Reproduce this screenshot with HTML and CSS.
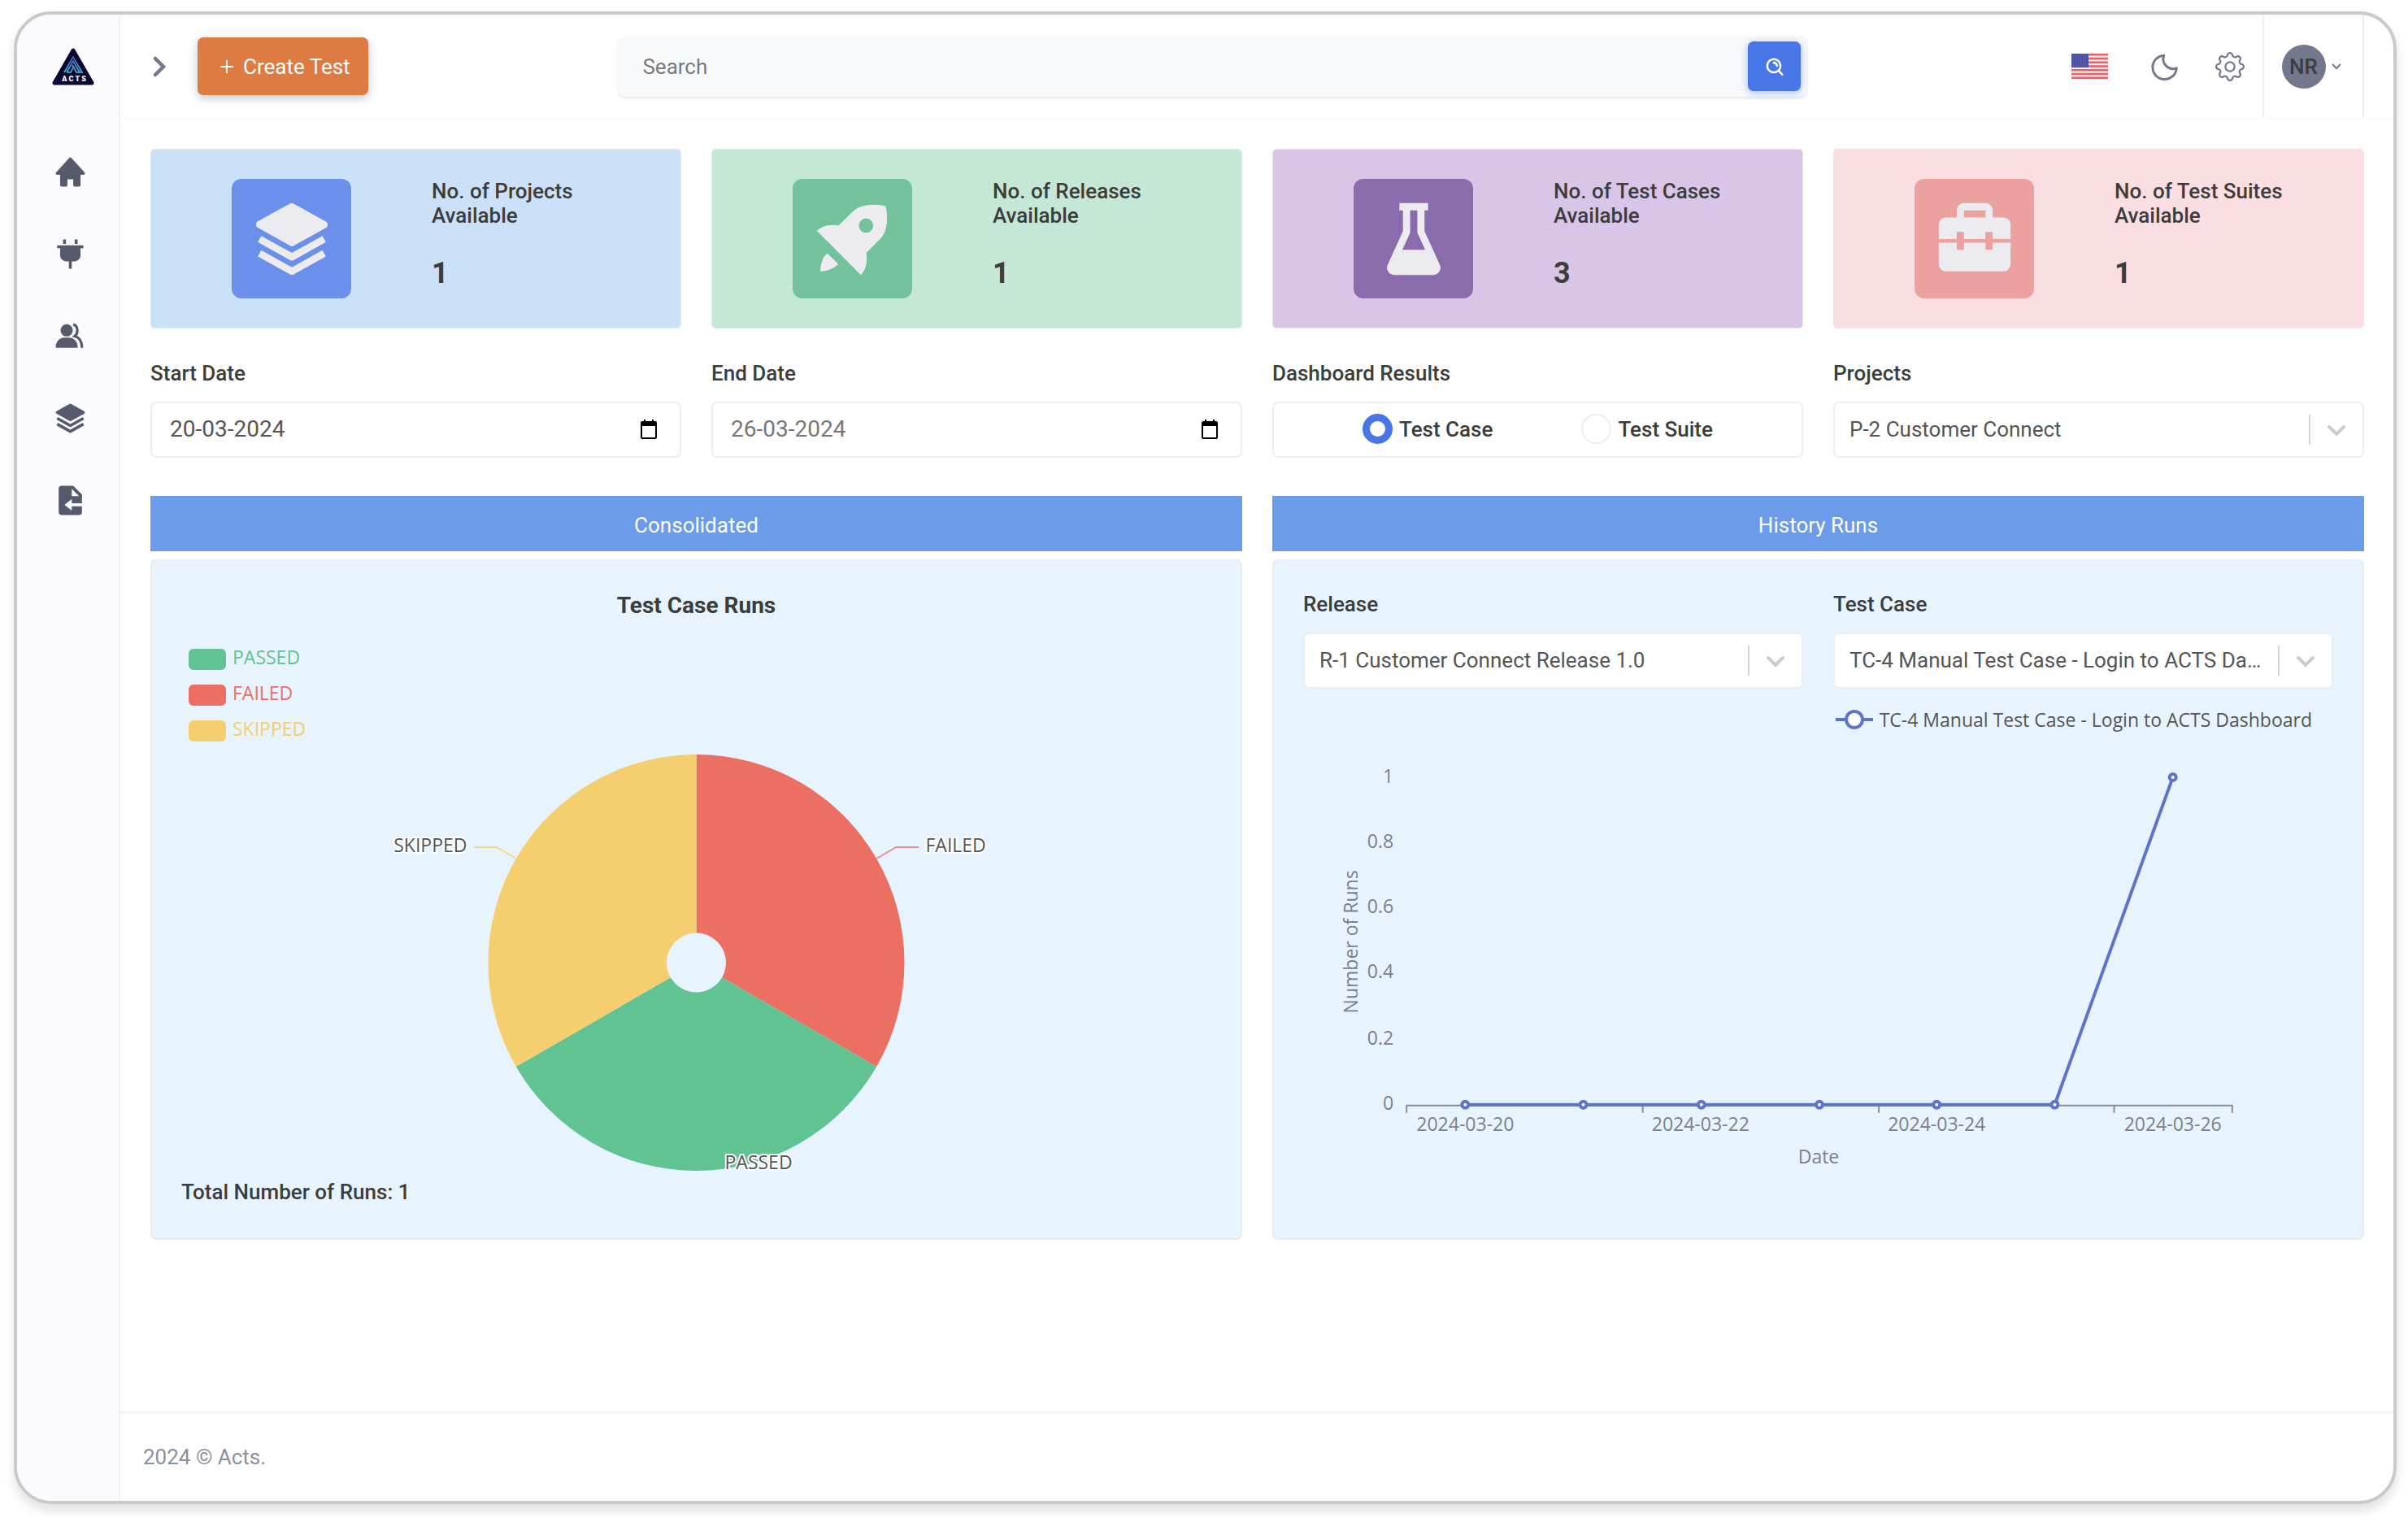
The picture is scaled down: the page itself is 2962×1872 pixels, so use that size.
FILE: index.html
```html
<!DOCTYPE html>
<html lang="en">
<head>
  <meta charset="UTF-8" />
  <meta name="viewport" content="width=device-width, initial-scale=1" />
  <title>ACTS Dashboard</title>
  <link rel="stylesheet" href="styles.css">
</head>
<body>
  <div class="app">
    <aside class="sidebar">
      <a class="brand" href="#" aria-label="ACTS">
        <svg width="52" height="46" viewBox="0 0 52 46">
          <defs>
            <linearGradient id="mark" x1="0" y1="0" x2="0" y2="1">
              <stop offset="0" stop-color="#4a5fd0" />
              <stop offset="1" stop-color="#3cc0cf" />
            </linearGradient>
          </defs>
          <path d="M26 3 3 43h46z" fill="#0a0830" stroke="#0a0830" stroke-width="5" stroke-linejoin="round" />
          <path d="M15 30 26 11l11 19h-7l-5-9M18 30h5l4-8M18 30l8-14 8 14" fill="none" stroke="url(#mark)" stroke-width="1.6" />
          <text class="brand-text" x="27" y="41" text-anchor="middle">A C T S</text>
        </svg>
      </a>
      <nav class="side-nav">
        <a href="#" aria-label="Home">
          <svg class="icon" viewBox="0 0 24 24"><path d="m21.743 12.331-9-10c-.379-.422-1.107-.422-1.486 0l-9 10a.998.998 0 0 0-.17 1.076c.16.361.518.593.913.593h2v7a1 1 0 0 0 1 1h3a1 1 0 0 0 1-1v-4h4v4a1 1 0 0 0 1 1h3a1 1 0 0 0 1-1v-7h2a.998.998 0 0 0 .743-1.669z" /></svg>
        </a>
        <a href="#" aria-label="Integrations">
          <svg class="icon" viewBox="0 0 24 24"><path d="M7 2h2v3H7zM15 2h2v3h-2zM3 6v2h2v5a4 4 0 0 0 4 4h2v5h2v-5h2a4 4 0 0 0 4-4V8h2V6z" /></svg>
        </a>
        <a href="#" aria-label="Users">
          <svg class="icon" viewBox="0 0 24 24">
            <circle cx="9.5" cy="8" r="4.2" />
            <path d="M2 20v-1a6 6 0 0 1 6-6h3a6 6 0 0 1 6 6v1z" />
            <path d="M14 4c3 .6 4 5.6 1 8 3 .8 5 3.5 5 8" fill="none" stroke="currentColor" stroke-width="1.8" />
          </svg>
        </a>
        <a href="#" aria-label="Releases">
          <svg class="icon" viewBox="0 0 24 24"><path d="M21.484 7.125l-9.022-5a1.003 1.003 0 0 0-.968 0l-8.978 4.96a1 1 0 0 0-.003 1.748l9.022 5.04a.995.995 0 0 0 .973.001l8.978-5a1 1 0 0 0-.002-1.749z" /><path d="M12 15.856l-8.515-4.73-.971 1.748 9 5a1 1 0 0 0 .971 0l9-5-.971-1.748z" /><path d="M12 19.856l-8.515-4.73-.971 1.748 9 5a1 1 0 0 0 .971 0l9-5-.971-1.748z" /></svg>
        </a>
        <a href="#" aria-label="Import">
          <svg class="icon" viewBox="0 0 24 24"><path fill-rule="evenodd" d="M20 8l-6-6H6a2 2 0 0 0-2 2v16a2 2 0 0 0 2 2h12a2 2 0 0 0 2-2v-4h-7v3l-5-4 5-4v3h7zM13 9V4l5 5z" /></svg>
        </a>
      </nav>
    </aside>

    <div class="page">
      <header class="topbar">
        <button class="menu-toggle" type="button" aria-label="Expand menu">
          <svg width="24" height="30" viewBox="0 0 24 30"><path d="M7 5l10 10L7 25" fill="none" stroke="currentColor" stroke-width="4.5" stroke-linecap="round" /></svg>
        </button>
        <button class="create-btn" type="button">
          <svg width="24" height="24" viewBox="0 0 24 24"><path d="M13 4v16M5 12h16" fill="none" stroke="currentColor" stroke-width="2" /></svg>
          Create Test
        </button>
        <form class="search">
          <input type="text" placeholder="Search" aria-label="Search" />
          <button class="search-btn" type="button" aria-label="Submit search">
            <svg width="26" height="26" viewBox="0 0 24 24" fill="none" stroke="currentColor" stroke-width="2.4" stroke-linecap="round"><circle cx="11" cy="11" r="7.5" /><path d="M16.5 16.5 20.500 21M11 7.500a3.500 3.500 0 0 1 3.500 3.500" /></svg>
          </button>
        </form>
        <div class="tools">
          <button class="flag" type="button" aria-label="Language">
            <svg width="45" height="31" viewBox="0 0 45 31">
              <path fill="#fbe9ea" d="M0 0h45v31H0z" />
              <path stroke="#ea6068" stroke-width="2.4" d="M0 1.2h45M0 6h45M0 10.7h45M0 15.5h45M0 20.3h45M0 25h45M0 29.8h45" />
              <path fill="#4d51a3" d="M0 0h21v17H0z" />
              <path stroke="#7476b8" stroke-width="1" stroke-dasharray="1 2" d="M2 3h18M2 6h18M2 9h18M2 12h18M2 15h18" />
            </svg>
          </button>
          <button type="button" aria-label="Dark mode">
            <svg width="36" height="36" viewBox="0 0 24 24"><path d="M21.5 13.2A9.8 9.8 0 1 1 11.2 2.8 8 8 0 0 0 21.5 13.2z" fill="none" stroke="currentColor" stroke-width="2" stroke-linejoin="round" /></svg>
          </button>
          <button type="button" aria-label="Settings">
            <svg width="36" height="36" viewBox="0 0 16 16"><circle cx="8" cy="8" r="2.5" fill="none" stroke="currentColor" /><path fill="currentColor" d="M9.796 1.343c-.527-1.79-3.065-1.79-3.592 0l-.094.319a.873.873 0 0 1-1.255.52l-.292-.16c-1.64-.892-3.433.902-2.54 2.541l.159.292a.873.873 0 0 1-.52 1.255l-.319.094c-1.79.527-1.79 3.065 0 3.592l.319.094a.873.873 0 0 1 .52 1.255l-.16.292c-.892 1.64.901 3.434 2.541 2.54l.292-.159a.873.873 0 0 1 1.255.52l.094.319c.527 1.79 3.065 1.79 3.592 0l.094-.319a.873.873 0 0 1 1.255-.52l.292.16c1.64.893 3.434-.902 2.54-2.541l-.159-.292a.873.873 0 0 1 .52-1.255l.319-.094c1.79-.527 1.79-3.065 0-3.592l-.319-.094a.873.873 0 0 1-.52-1.255l.16-.292c.893-1.64-.902-3.433-2.541-2.54l-.292.159a.873.873 0 0 1-1.255-.52zm-2.633.283c.246-.835 1.428-.835 1.674 0l.094.319a1.873 1.873 0 0 0 2.693 1.115l.291-.16c.764-.415 1.6.42 1.184 1.185l-.159.292a1.873 1.873 0 0 0 1.116 2.692l.318.094c.835.246.835 1.428 0 1.674l-.319.094a1.873 1.873 0 0 0-1.115 2.693l.16.291c.415.764-.42 1.6-1.185 1.184l-.291-.159a1.873 1.873 0 0 0-2.693 1.116l-.094.318c-.246.835-1.428.835-1.674 0l-.094-.319a1.873 1.873 0 0 0-2.692-1.115l-.292.16c-.764.415-1.6-.42-1.184-1.185l.159-.291A1.873 1.873 0 0 0 1.945 8.93l-.319-.094c-.835-.246-.835-1.428 0-1.674l.319-.094A1.873 1.873 0 0 0 3.06 4.377l-.16-.292c-.415-.764.42-1.6 1.185-1.184l.292.159a1.873 1.873 0 0 0 2.692-1.115z" /></svg>
          </button>
        </div>
        <button class="profile" type="button">
          <span class="avatar">NR</span>
          <svg width="14" height="12" viewBox="0 0 14 12"><path d="M2 3l5 5 5-5" fill="none" stroke="currentColor" stroke-width="2" /></svg>
        </button>
      </header>

      <main class="content">
        <section class="stats">
          <article class="stat stat-projects">
            <div class="stat-icon">
              <svg viewBox="0 0 24 24"><path d="M21.484 7.125l-9.022-5a1.003 1.003 0 0 0-.968 0l-8.978 4.96a1 1 0 0 0-.003 1.748l9.022 5.04a.995.995 0 0 0 .973.001l8.978-5a1 1 0 0 0-.002-1.749z" /><path d="M12 15.856l-8.515-4.73-.971 1.748 9 5a1 1 0 0 0 .971 0l9-5-.971-1.748z" /><path d="M12 19.856l-8.515-4.73-.971 1.748 9 5a1 1 0 0 0 .971 0l9-5-.971-1.748z" /></svg>
            </div>
            <div class="stat-text">
              <h2>No. of Projects<br />Available</h2>
              <p>1</p>
            </div>
          </article>
          <article class="stat stat-releases">
            <div class="stat-icon">
              <svg viewBox="0 0 24 24"><path d="M15.78 15.84S18.64 13 19.61 12c3.07-3 1.54-9.18 1.54-9.18S15 1.29 12 4.36C9.66 6.64 8.14 8.22 8.14 8.22S4.3 7.42 2 9.72L14.25 22c2.3-2.33 1.53-6.16 1.53-6.16zm-1.5-9a2 2 0 0 1 2.83 0 2 2 0 1 1-2.83 0zM3 21a7.81 7.81 0 0 0 5-2l-3-3c-2 1-2 5-2 5z" /></svg>
            </div>
            <div class="stat-text">
              <h2>No. of Releases<br />Available</h2>
              <p>1</p>
            </div>
          </article>
          <article class="stat stat-cases">
            <div class="stat-icon">
              <svg viewBox="0 0 24 24"><path d="M15 9.783V4h1V2H8v2h1v5.783l-4.268 9.389a1.992 1.992 0 0 0 .14 1.911A1.99 1.99 0 0 0 6.553 22h10.895a1.99 1.99 0 0 0 1.681-.917c.37-.574.423-1.289.14-1.911L15 9.783zm-4.09.631c.06-.13.09-.271.09-.414V4h2v6c0 .143.03.284.09.414L15.177 15H8.825l2.085-4.586z" /></svg>
            </div>
            <div class="stat-text">
              <h2>No. of Test Cases<br />Available</h2>
              <p>3</p>
            </div>
          </article>
          <article class="stat stat-suites">
            <div class="stat-icon">
              <svg viewBox="0 0 24 24"><path fill-rule="evenodd" d="M2 12V8a2 2 0 0 1 2-2h3V4a2 2 0 0 1 2-2h6a2 2 0 0 1 2 2v2h3a2 2 0 0 1 2 2v4h-5v-2h-2v2H9v-2H7v2zM9 4v2h6V4z" /><path d="M2 13v6a2 2 0 0 0 2 2h16a2 2 0 0 0 2-2v-6h-5v2h-2v-2H9v2H7v-2z" /></svg>
            </div>
            <div class="stat-text">
              <h2>No. of Test Suites<br />Available</h2>
              <p>1</p>
            </div>
          </article>
        </section>

        <section class="filters">
          <div class="field">
            <label for="start-date">Start Date</label>
            <div class="control">
              <input type="text" id="start-date" value="20-03-2024" />
              <svg class="calendar" width="20" height="24" viewBox="0 0 20 24"><path d="M4 0h2v2h8V0h2v2h2a2 2 0 0 1 2 2v18a2 2 0 0 1-2 2H2a2 2 0 0 1-2-2V4a2 2 0 0 1 2-2h2zM2 8v14h16V8z" fill-rule="evenodd" /></svg>
            </div>
          </div>
          <div class="field">
            <label for="end-date">End Date</label>
            <div class="control">
              <input type="text" id="end-date" class="muted" value="26-03-2024" />
              <svg class="calendar" width="20" height="24" viewBox="0 0 20 24"><path d="M4 0h2v2h8V0h2v2h2a2 2 0 0 1 2 2v18a2 2 0 0 1-2 2H2a2 2 0 0 1-2-2V4a2 2 0 0 1 2-2h2zM2 8v14h16V8z" fill-rule="evenodd" /></svg>
            </div>
          </div>
          <div class="field">
            <span class="field-title" id="results-title">Dashboard Results</span>
            <div class="control radios" role="radiogroup" aria-labelledby="results-title">
              <label for="r-case"><input type="radio" name="results" id="r-case" checked />Test Case</label>
              <label for="r-suite"><input type="radio" name="results" id="r-suite" />Test Suite</label>
            </div>
          </div>
          <div class="field">
            <label for="projects">Projects</label>
            <div class="control select">
              <select id="projects">
                <option>P-2 Customer Connect</option>
              </select>
              <svg class="caret" width="24" height="16" viewBox="0 0 24 16"><path d="M3 3l9 9 9-9" fill="none" stroke="#ccc" stroke-width="4" stroke-linecap="round" /></svg>
            </div>
          </div>
        </section>

        <section class="charts">
          <div class="chart-col">
            <h2 class="chart-tab">Consolidated</h2>
            <div class="panel">
              <h3 class="chart-title">Test Case Runs</h3>
              <ul class="legend">
                <li class="passed">PASSED</li>
                <li class="failed">FAILED</li>
                <li class="skipped">SKIPPED</li>
              </ul>
              <svg class="pie" viewBox="0 0 800 525">
                <path fill="#eb6f63" d="M400 7a256 256 0 0 1 221.700 384L431.600 281.250A36.500 36.500 0 0 0 400 226.500z" />
                <path fill="#61c292" d="M621.700 391a256 256 0 0 1-443.400 0L368.400 281.250a36.500 36.500 0 0 0 63.200 0z" />
                <path fill="#f4ce6f" d="M178.300 391A256 256 0 0 1 400 7v219.500a36.500 36.500 0 0 0-31.600 54.750z" />
                <path fill="none" stroke="#eb8f8b" stroke-width="2" d="M621.700 135l24-14h28" />
                <path fill="none" stroke="#f3d88c" stroke-width="2" d="M178.300 135l-24-14h-28" />
                <text class="pie-label" x="118" y="127" text-anchor="end">SKIPPED</text>
                <text class="pie-label" x="682" y="127">FAILED</text>
                <text class="pie-label" x="435" y="517">PASSED</text>
              </svg>
              <p class="total">Total Number of Runs: 1</p>
            </div>
          </div>

          <div class="chart-col">
            <h2 class="chart-tab">History Runs</h2>
            <div class="panel">
              <div class="panel-filters">
                <div class="field">
                  <label for="release">Release</label>
                  <div class="control select">
                    <select id="release">
                      <option>R-1 Customer Connect Release 1.0</option>
                    </select>
                    <svg class="caret" width="24" height="16" viewBox="0 0 24 16"><path d="M3 3l9 9 9-9" fill="none" stroke="#ccc" stroke-width="4" stroke-linecap="round" /></svg>
                  </div>
                </div>
                <div class="field">
                  <label for="test-case">Test Case</label>
                  <div class="control select">
                    <select id="test-case">
                      <option>TC-4 Manual Test Case - Login to ACTS Dashboard</option>
                    </select>
                    <svg class="caret" width="24" height="16" viewBox="0 0 24 16"><path d="M3 3l9 9 9-9" fill="none" stroke="#ccc" stroke-width="4" stroke-linecap="round" /></svg>
                  </div>
                </div>
              </div>
              <div class="line-legend">
                <svg width="46" height="26" viewBox="0 0 46 26"><path d="M0 13h46" stroke="#5c74c9" stroke-width="4" /><circle cx="23" cy="13" r="10" fill="#fff" stroke="#5c74c9" stroke-width="4" /></svg>
                TC-4 Manual Test Case - Login to ACTS Dashboard
              </div>
              <svg class="line-chart" viewBox="0 0 1265 577">
                <g class="axis-text" text-anchor="end">
                  <text x="111" y="54">1</text>
                  <text x="111" y="134">0.8</text>
                  <text x="111" y="214">0.6</text>
                  <text x="111" y="294">0.4</text>
                  <text x="111" y="375">0.2</text>
                  <text x="111" y="455">0</text>
                </g>
                <g class="axis-text" text-anchor="middle">
                  <text x="199" y="481">2024-03-20</text>
                  <text x="488" y="481">2024-03-22</text>
                  <text x="778" y="481">2024-03-24</text>
                  <text x="1068" y="481">2024-03-26</text>
                  <text x="633" y="521">Date</text>
                  <text transform="translate(67 249) rotate(-90)">Number of Runs</text>
                </g>
                <path d="M126 450h1016M127 450v9M417 450v9M707 450v9M996 450v9M1141 450v9" fill="none" stroke="#868c97" stroke-width="2" />
                <path d="M199 449h724L1068 47" fill="none" stroke="#5c74c9" stroke-width="4" stroke-linejoin="round" />
                <g fill="#fff" stroke="#5c74c9" stroke-width="4">
                  <circle cx="199" cy="449" r="4" />
                  <circle cx="344" cy="449" r="4" />
                  <circle cx="489" cy="449" r="4" />
                  <circle cx="634" cy="449" r="4" />
                  <circle cx="778" cy="449" r="4" />
                  <circle cx="923" cy="449" r="4" />
                  <circle cx="1068" cy="47" r="4" />
                </g>
              </svg>
            </div>
          </div>
        </section>
      </main>

      <footer class="footer">2024 © Acts.</footer>
    </div>
  </div>
</body>
</html>
```
FILE: styles.css
```css
* {
  box-sizing: border-box;
}

body {
  margin: 0;
  padding: 14px 14px 22px 17px;
  min-height: 100vh;
  display: flex;
  background: #fff;
  color: #3b3d3c;
  font-family: Roboto, "Liberation Sans", sans-serif;
  font-size: 26px;
  line-height: 36px;
}

h2, h3, p, ul {
  margin: 0;
  padding: 0;
}

button, input, select {
  font: inherit;
  color: inherit;
}

button {
  display: flex;
  align-items: center;
  justify-content: center;
  padding: 0;
  border: 0;
  background: none;
  cursor: pointer;
}

.app {
  flex: 1;
  display: flex;
  overflow: hidden;
  border: 4px solid #cacaca;
  border-radius: 46px;
  box-shadow: 0 8px 14px rgba(0, 0, 0, 0.12);
}

/* sidebar */
.sidebar {
  flex: 0 0 127px;
  background: #fbfaff;
  border-right: 2px solid #f0f0f5;
}

.brand {
  display: flex;
  height: 134px;
  padding: 41px 0 0 43px;
  border-bottom: 1px solid #f8f7fd;
}

.brand-text {
  fill: #fff;
  font-size: 9px;
  font-weight: 900;
}

.side-nav {
  display: flex;
  flex-direction: column;
  align-items: center;
  gap: 58px;
  padding: 38px 0 0 5px;
  color: #555b6d;
}

.side-nav a {
  display: flex;
  color: inherit;
}

.icon {
  width: 43px;
  height: 43px;
  fill: currentColor;
}

.page {
  flex: 1;
  min-width: 0;
  display: flex;
  flex-direction: column;
}

/* top bar */
.topbar {
  display: flex;
  align-items: center;
  height: 129px;
  padding: 0 36px;
  border-bottom: 2px solid #fafafb;
  color: #74788d;
}

.menu-toggle {
  width: 59px;
  justify-content: flex-start;
}

.create-btn {
  gap: 9px;
  height: 71px;
  padding: 0 22px 0 23px;
  border-radius: 7px;
  background: #de7b42;
  color: #fff;
  white-space: nowrap;
  box-shadow: 0 4px 12px rgba(60, 70, 110, 0.3);
}

.search {
  display: flex;
  align-items: center;
  width: 53.7%;
  height: 75px;
  margin: 0 auto 0 11.3%;
  padding: 0 8px 0 30px;
  border-radius: 8px;
  background: #f8f9fb;
  box-shadow: 0 2px 3px rgba(0, 0, 0, 0.1);
}

.search input {
  flex: 1;
  min-width: 0;
  padding: 0;
  border: 0;
  outline: 0;
  background: none;
}

.search input::placeholder {
  color: #7a7a7a;
  opacity: 1;
}

.search-btn {
  width: 65px;
  height: 61px;
  border-radius: 7px;
  background: #4876e6;
  color: #fff;
  box-shadow: 0 2px 10px rgba(72, 118, 230, 0.5);
}

.tools {
  display: flex;
  align-items: center;
  gap: 44px;
  margin-right: 22px;
}

.flag {
  margin-right: 8px;
}

.tools button,
.profile {
  color: #74788d;
}

.profile {
  align-self: stretch;
  gap: 6px;
  width: 125px;
  padding-right: 4px;
  border: solid #eeeef2;
  border-width: 0 2px;
}

.avatar {
  width: 54px;
  height: 54px;
  border-radius: 50%;
  background: #74788d;
  color: #3b3d3c;
  font-weight: 500;
  line-height: 54px;
}

/* content */
.content {
  flex: 1;
  padding: 36px 36px 36px 37px;
}

.stats,
.filters {
  display: grid;
  grid-template-columns: repeat(4, 1fr);
  gap: 37px;
}

.stat {
  display: grid;
  grid-template-columns: 53% 47%;
  padding: 36px 0;
  border: 1px solid #e6e8ef;
  border-radius: 5px;
}

.stat-icon {
  display: flex;
  align-items: center;
  justify-content: center;
  justify-self: center;
  width: 147px;
  height: 147px;
  border-radius: 12px;
}

.stat-icon svg {
  width: 106px;
  height: 106px;
  fill: #ecebf0;
}

.stat h2 {
  font-size: 26px;
  font-weight: 500;
  line-height: 30px;
}

.stat p {
  margin-top: 34px;
  font-size: 36px;
  font-weight: 700;
  line-height: 44px;
}

.stat-projects {
  background: #cae1f7;
}

.stat-projects .stat-icon {
  background: #6a90eb;
}

.stat-releases {
  background: #c4e7d6;
}

.stat-releases .stat-icon {
  background: #73c29b;
}

.stat-cases {
  background: #d8c5e8;
}

.stat-cases .stat-icon {
  background: #8a6cad;
}

.stat-suites {
  background: #fadee1;
}

.stat-suites .stat-icon {
  background: #eba1a0;
}

.filters {
  margin: 37px 0 47px;
}

.field {
  min-width: 0;
}

.field > label,
.field-title {
  display: block;
  margin-bottom: 17px;
  font-weight: 500;
}

.control {
  position: relative;
  display: flex;
  align-items: center;
  height: 69px;
  padding-bottom: 2px;
  border: 2px solid #ededf2;
  border-radius: 7px;
  background: #fff;
}

.control input[type="text"] {
  flex: 1;
  min-width: 0;
  padding: 0 22px;
  border: 0;
  outline: 0;
  background: none;
  color: #555;
  font-size: 28px;
}

.control input.muted {
  color: #777;
}

.calendar {
  margin-right: 28px;
}

.radios {
  justify-content: space-evenly;
}

.radios label {
  display: flex;
  align-items: center;
  gap: 8px;
  font-weight: 500;
}

.radios input {
  appearance: none;
  width: 37px;
  height: 37px;
  margin: 0;
  border: 2px solid #ededf0;
  border-radius: 50%;
  background: #fff;
}

.radios input:checked {
  border: 9px solid #4876e6;
}

.select select {
  appearance: none;
  width: 100%;
  height: 100%;
  padding: 0 76px 0 18px;
  border: 0;
  outline: 0;
  border-radius: 7px;
  background: none;
  color: #555;
  text-overflow: ellipsis;
}

.select::after {
  content: "";
  position: absolute;
  top: 14px;
  right: 64px;
  width: 2px;
  height: 37px;
  background: #d4d4d4;
}

.caret {
  position: absolute;
  top: 26px;
  right: 20px;
  pointer-events: none;
}

/* charts */
.charts {
  display: grid;
  grid-template-columns: 1fr 1fr;
  gap: 37px;
}

.chart-col {
  display: flex;
  flex-direction: column;
  gap: 10px;
  min-width: 0;
}

.chart-tab {
  padding: 18px 0 14px;
  background: #6b9be9;
  color: #fff;
  font-size: 26px;
  font-weight: 400;
  text-align: center;
}

.panel {
  flex: 1;
  padding: 35px 36px 36px;
  border: 2px solid #e9ebf2;
  border-radius: 7px;
  background: #e8f4fd;
}

.chart-title {
  font-size: 28px;
  font-weight: 700;
  line-height: 40px;
  text-align: center;
}

.legend {
  display: flex;
  flex-direction: column;
  gap: 18px;
  margin: 33px 0 9px 9px;
  list-style: none;
  font-family: "Open Sans", "Noto Sans", sans-serif;
  font-size: 23px;
  line-height: 20px;
}

.legend li {
  display: flex;
  align-items: flex-start;
  gap: 8px;
  height: 26px;
}

.legend li::before {
  content: "";
  width: 46px;
  height: 26px;
  border-radius: 6px;
  background: currentColor;
}

.passed {
  color: #61c292;
}

.failed {
  color: #eb6f63;
}

.skipped {
  color: #f4ce6f;
}

.pie {
  display: block;
  width: 100%;
  height: 525px;
}

.pie-label {
  fill: #555;
  stroke: #fff;
  stroke-width: 4px;
  stroke-linejoin: round;
  paint-order: stroke;
  font-family: "Open Sans", "Noto Sans", sans-serif;
  font-size: 23px;
}

.total {
  margin-top: 2px;
  font-weight: 500;
}

.panel-filters {
  display: grid;
  grid-template-columns: 1fr 1fr;
  gap: 37px;
}

.line-legend {
  display: flex;
  align-items: center;
  justify-content: flex-end;
  gap: 8px;
  margin: 20px 26px 6px 0;
  color: #555;
  font-family: "Open Sans", "Noto Sans", sans-serif;
  font-size: 23px;
}

.line-chart {
  display: block;
  width: 100%;
}

.axis-text text {
  fill: #7b8089;
  font-family: "Open Sans", "Noto Sans", sans-serif;
  font-size: 23px;
}

.footer {
  height: 110px;
  padding: 36px 28px;
  border-top: 2px solid #f2f2f2;
  color: #8a8fa2;
}
```
